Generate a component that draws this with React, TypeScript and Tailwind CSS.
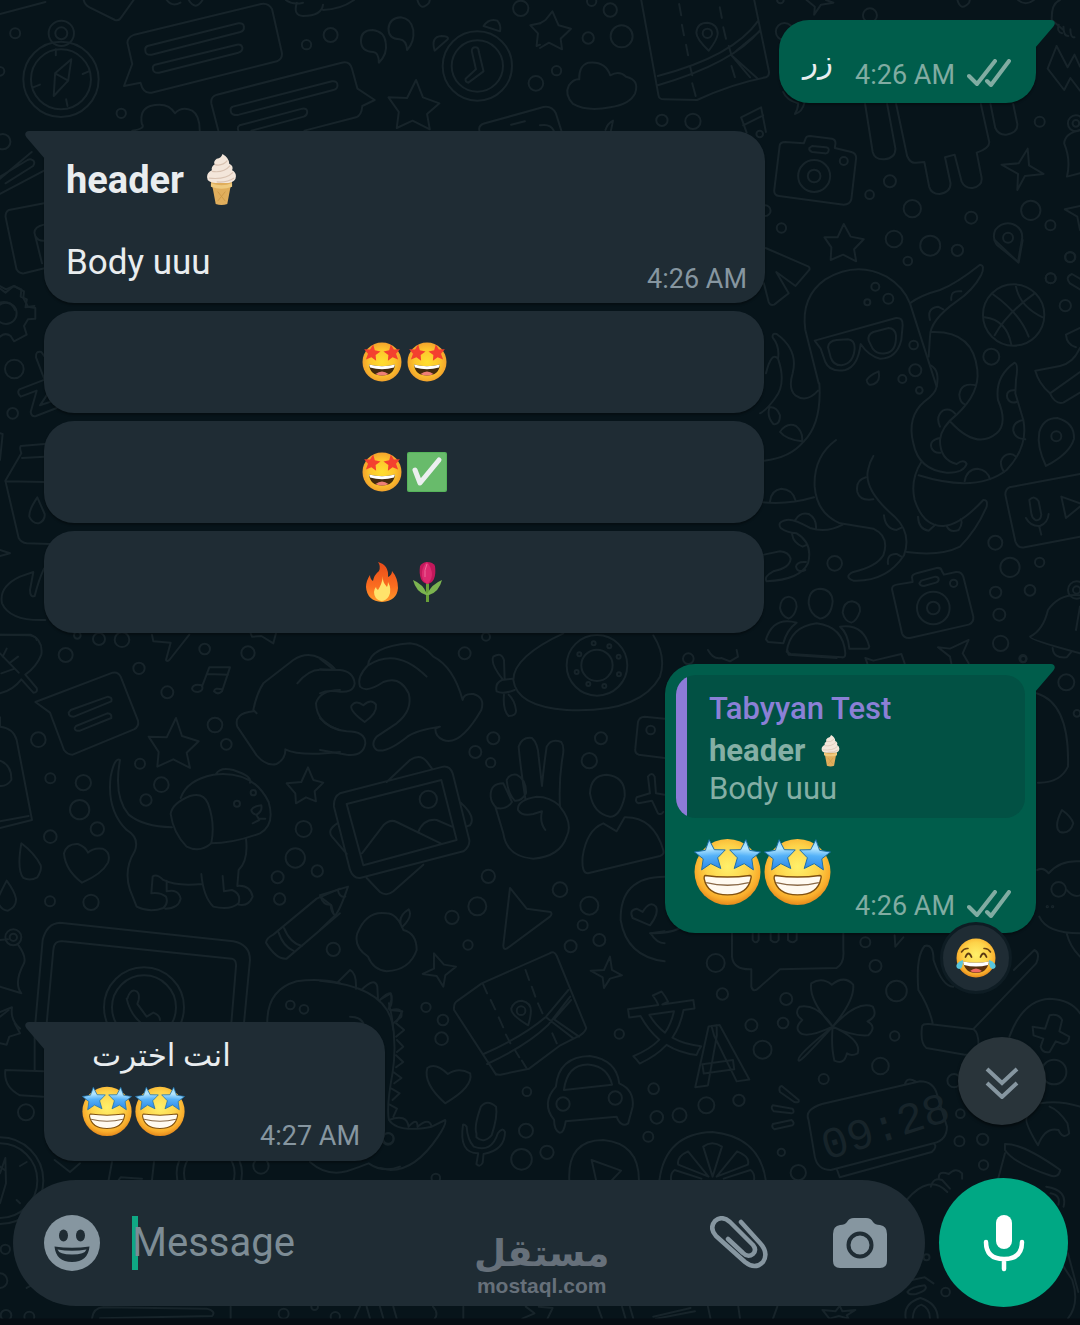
import type { ReactNode } from "react";
import clsx from "clsx";

type Region = {
  id: string;
  origin: [number, number];
  scale: [number, number];
  lines: string[];
  dots: [number, number, number][];
};

// Wallpaper doodles, each region has its own origin and scale
const DOODLES: Region[] = [
  {
    id: "top-left",
    origin: [0, 0],
    scale: [0.3444, 0.3333],
    lines: [
      "M207 178L160 220L156 288L198 242ZM160 220L198 242M162 148V166M240 222L258 214M96 262L116 254M192 298L196 318",
      "M0 42L132 6M243 0Q246 14 260 22L334 60Q346 64 352 52L388 0M484 0Q500 22 524 8M548 0Q568 34 588 0",
      "M370 128Q370 112 390 104L758 12Q780 8 790 28L818 156Q822 176 804 184L440 278Q416 282 408 248L360 258L384 192Z",
      "M428 138L692 70Q708 68 708 80Q710 92 698 96L440 164Q422 166 422 152Q420 142 428 138ZM450 194L688 134Q702 132 704 144Q704 154 692 158L462 218Q444 220 444 206Q442 198 450 194Z",
      "M634 392L614 312Q610 290 630 284L992 188Q1016 182 1022 206L1038 266L1088 300L1052 318Q1050 346 1034 352L884 392",
      "M676 320L964 244Q980 242 980 256Q980 268 968 270L694 344Q672 348 670 334Q668 322 676 320ZM696 376L878 326Q892 324 892 336Q892 346 882 350L730 392M696 376Q688 380 692 392",
      "M384 392Q424 386 412 372Q404 330 436 318Q488 304 508 340Q528 318 558 332Q580 346 580 392",
      "M1100 188Q1100 158 1084 156Q1048 154 1048 122Q1048 90 1082 90Q1116 94 1120 128Q1126 162 1100 188ZM1182 150Q1180 120 1160 118Q1128 116 1128 86Q1130 54 1164 52Q1194 56 1200 90Q1204 126 1182 150Z",
      "M1208 240L1228 292L1276 310L1240 342L1248 388L1198 362L1152 384L1158 336L1128 292L1182 294Z",
      "M1380 142Q1390 142 1390 154L1404 214L1360 248Q1350 246 1352 236L1382 208L1370 154Q1370 142 1380 142ZM1262 152Q1250 110 1282 108Q1304 108 1300 118ZM1404 78Q1420 54 1444 62Q1456 76 1452 94Z",
      "M830 0Q850 16 880 8M938 30Q990 28 1028 0M862 8Q850 46 880 48Q934 48 938 14M1212 0Q1222 36 1246 8L1248 0M1540 76L1568 70M1540 76L1562 100L1558 138L1568 134M1392 392Q1388 376 1408 370L1568 324M1484 374L1524 364",
      "M0 536L92 456M0 582L128 512M16 550L96 498Q104 486 94 480Q88 476 80 480L0 530M128 610L26 630Q16 636 16 650L48 808Q56 822 70 820L132 804M128 674Q100 680 100 698L122 790M104 710Q112 724 130 722",
      "M0 866L16 878L40 858L62 868L60 890L78 898L74 922L100 918M0 908Q30 900 44 930",
    ],
    dots: [
      [177, 238, 113], [177, 238, 90], [178, 100, 38], [178, 100, 18], [44, 100, 15], [352, 340, 14],
      [0, 214, 13], [8, 425, 23], [890, 134, 14], [960, 105, 21], [1386, 198, 104], [1386, 198, 77],
      [1512, 25, 23], [1556, 250, 22],
    ],
  },
  {
    id: "top-right",
    origin: [540, 0],
    scale: [0.3444, 0.3333],
    lines: [
      "M0 70L16 60L36 34L54 76L90 86L60 116L64 148L26 128L0 144",
      "M294 0L344 286Q346 298 360 298L456 300Q560 250 656 232Q668 226 664 210L622 0M342 228Q560 170 634 62M342 256Q560 190 638 92M436 200L442 226M548 138L556 166L630 234M556 166L610 232M640 92L570 152",
      "M404 12L410 46M412 74L418 106M424 134L430 166M442 250L452 288M522 22L528 54M532 82L540 116M556 198L566 232",
      "M490 152Q454 116 454 98Q456 68 486 68Q516 72 516 102Q514 120 490 152Z",
      "M96 312Q70 284 84 256Q98 236 114 238Q112 198 140 188Q190 182 204 226Q230 210 250 230Q290 240 276 280Q262 312 204 322Q136 336 96 312Z",
      "M0 324Q32 312 46 340L62 392M0 376Q30 370 40 392M190 390Q196 370 212 362L206 392M600 398L584 352L642 322L656 396M590 376L648 346",
      "M774 0L798 20L796 44L816 14L852 8L830 0M1212 0Q1222 36 1246 8L1248 0M1388 0Q1410 20 1434 0",
      "M706 276Q716 302 750 310Q748 330 740 342Q762 336 768 308",
      "M696 436Q698 426 712 426L766 430L772 414Q774 408 784 408L848 416Q858 418 858 430L856 444L904 456Q918 460 918 474L904 598Q900 614 882 614L694 588Q680 586 680 572ZM790 438L830 442Q840 444 838 452Q836 462 826 460L790 456Q780 452 782 444Z",
      "M944 312L966 456Q972 480 1000 478Q1032 474 1032 446L1008 312M1034 312L1066 468Q1076 492 1092 488L1116 486L1130 560Q1136 582 1160 582Q1192 578 1192 550L1176 472L1204 464L1224 544Q1234 566 1256 564Q1286 558 1282 532L1268 458Q1308 444 1304 424L1280 312M1308 312L1322 384Q1332 406 1354 404Q1388 398 1386 372L1374 312",
      "M1416 446L1420 496L1462 522L1408 528L1386 570L1388 522L1340 494L1390 490Z",
      "M1500 138L1532 202L1552 164L1568 200M1500 138L1474 206L1522 270L1540 234L1568 272M1486 60Q1484 10 1510 0M1486 60L1520 90M1506 74Q1500 96 1516 100M1520 80Q1520 108 1534 108M1540 88Q1540 114 1552 112",
      "M1568 390Q1524 400 1522 430Q1542 480 1530 530L1568 520M1524 628L1568 618M1524 628L1560 650L1568 690",
      "M882 672L902 710L940 718L912 748L918 784L880 764L844 780L846 742L826 712L864 712Z",
      "M1388 786L1326 734Q1312 714 1322 690Q1342 664 1372 672Q1402 684 1400 714Z",
      "M655 744L780 800Q786 806 780 812L742 858L686 816L722 880L680 914Q668 918 664 906L650 850",
    ],
    dots: [
      [486, 100, 14], [204, 30, 20], [140, 114, 17], [237, 109, 33], [48, 212, 14], [710, 95, 26],
      [958, 46, 21], [354, 361, 17], [444, 364, 23], [638, 402, 10], [796, 528, 48], [796, 528, 19], [882, 483, 12],
      [1016, 544, 18], [957, 584, 13], [1081, 626, 26], [1252, 653, 18], [1425, 631, 29], [1028, 717, 25],
      [1133, 737, 30], [1212, 751, 17], [1068, 783, 13], [701, 684, 14], [654, 632, 16], [1359, 713, 15],
      [1482, 676, 15], [1451, 365, 15], [1556, 370, 24], [1556, 370, 10], [1483, 835, 15], [1540, 771, 15],
      [150, 4, 14], [698, 0, 10],
    ],
  },
  {
    id: "octopus",
    origin: [760, 240],
    scale: [0.3333, 0.3333],
    lines: [
      "M176 430L136 270Q122 170 196 118Q290 62 380 110Q430 140 450 190L530 440Q526 462 494 484Q440 530 460 610Q476 690 560 698Q610 700 620 672Q612 656 590 672Q540 660 540 600Q544 560 590 524Q660 460 652 390Q640 270 512 276",
      "M450 190Q480 166 540 150Q590 130 660 74Q676 76 664 104Q640 150 590 184Q510 240 510 290L506 350M512 376Q540 390 530 440",
      "M572 546Q650 630 710 580Q744 550 714 480Q704 410 764 368Q776 372 768 420L766 460L790 540Q806 620 740 690Q650 760 476 706M484 666Q450 720 464 780Q490 860 550 858Q600 856 670 780Q684 778 680 800Q650 870 600 920Q540 950 440 936",
      "M164 302L408 234Q430 232 428 256L424 300Q410 356 360 356Q326 348 302 312Q294 380 256 390Q210 398 196 366L182 326ZM204 322Q206 302 230 300L264 298Q284 300 284 324Q282 370 244 376Q220 376 212 352ZM326 302Q322 284 340 276L386 264Q404 264 408 286Q410 336 376 340Q352 344 338 326Z",
      "M320 420Q328 406 356 394Q362 424 342 432Q322 440 320 420Z",
      "M178 430Q186 550 130 606Q90 654 12 662M174 452Q140 490 106 466Q84 446 98 400Q116 330 50 282Q36 278 38 292Q60 320 54 356Q34 334 18 400M54 356Q80 430 46 474Q20 510 0 520M30 502Q50 500 60 526Q60 556 40 552Q20 530 28 504M60 576Q80 546 108 558Q130 576 126 604Q80 600 60 576",
      "M228 600Q160 650 164 740Q170 820 240 850Q300 860 340 866Q390 890 370 946Q350 980 280 996Q250 1010 280 1022Q380 1026 432 946Q456 880 404 830Q310 750 324 690Q328 668 340 648",
      "M318 712Q286 720 292 756Q300 784 340 778M372 826Q376 866 410 870L426 862M384 972Q380 940 410 942L424 950M510 240Q500 204 534 200L550 208M574 180Q570 150 604 154M648 436Q604 426 598 464Q600 490 616 494M540 560Q526 530 548 512Q570 502 586 522M540 594Q508 600 514 622Q520 640 542 638M614 724Q620 688 652 686Q684 690 690 718M766 450Q736 450 742 474Q750 492 770 486M790 540Q758 546 760 572Q764 596 796 598M732 696Q710 660 740 644Q756 638 768 650M474 830Q476 868 506 872L526 854M560 858Q570 880 596 870Q610 850 602 838",
      "M0 786Q80 796 162 772M30 784Q34 750 64 746Q98 748 106 780M248 854Q200 880 150 864Q100 836 80 840Q50 846 62 864Q80 878 110 880Q160 910 144 970Q120 1020 20 1024Q10 1010 40 994Q90 984 92 956Q86 936 60 934L12 944M106 840Q120 816 146 822Q170 836 168 866M96 882Q100 910 128 920L142 914M136 990Q112 1000 108 980Q110 964 138 966",
      "M698 162Q780 220 806 290M768 140Q780 200 848 232M824 160Q740 220 704 286M674 232Q740 240 754 314",
      "M918 284L960 264M918 284Q920 314 948 322M960 324Q940 370 900 378L826 392Q836 430 870 460L960 396M870 460Q886 494 910 488L960 458M960 148L930 130Q914 112 936 102L960 116M704 0L776 68L788 0",
      "M858 678Q830 620 838 576Q850 534 892 534Q944 548 942 596Q930 640 858 678Z",
      "M960 702L748 742Q736 748 736 764L766 904Q774 926 794 922L960 890M808 780Q824 764 836 784L844 824Q842 844 826 840Q816 834 814 820ZM798 834Q812 860 840 858Q864 848 866 822M838 860L844 884M904 770L918 834L960 800M904 770L960 790",
      "M396 1048Q396 1036 410 1034L458 1026L456 1012Q456 1004 470 1000L530 984Q544 982 546 994L552 1004L588 996Q604 994 610 1010L640 1130Q642 1148 626 1154L450 1194Q432 1196 426 1180ZM484 1022L526 1010Q536 1010 536 1018Q536 1026 528 1028L492 1038Q480 1038 478 1030Z",
      "M80 1236Q90 1160 170 1150Q250 1160 256 1240Q256 1254 246 1252L92 1242ZM146 1090Q146 1048 180 1046Q216 1048 218 1084Q214 1130 180 1136Q150 1124 146 1090ZM60 1104Q62 1072 86 1070Q110 1074 110 1100Q104 1130 86 1136Q64 1128 60 1104ZM248 1118Q250 1086 276 1084Q302 1088 300 1114Q290 1144 274 1148Q254 1144 248 1118ZM110 1148Q40 1128 18 1198L24 1206L70 1210Q80 1170 110 1148ZM240 1160Q310 1150 328 1220Q326 1228 318 1226L268 1226Q264 1180 240 1160Z",
      "M534 1222L570 1226L626 1200L608 1240L626 1270M534 1222L570 1250L574 1270M316 1254L340 1262L424 1242L434 1270M316 1254L322 1270M960 1066Q900 1060 864 1110Q850 1170 810 1190Q808 1200 960 1240M878 1224Q880 1256 920 1252L934 1236M960 1100L948 1170",
    ],
    dots: [
      [346, 140, 12], [385, 176, 15], [322, 187, 9], [461, 315, 13], [466, 391, 18], [427, 417, 12], [478, 451, 10],
      [761, 225, 92], [694, 350, 24], [872, 115, 15], [916, 197, 17], [930, 52, 15], [889, 589, 15], [706, 908, 21],
      [750, 982, 29], [839, 967, 14], [224, 970, 22], [520, 1104, 49], [520, 1104, 19], [581, 1030, 11],
      [707, 1057, 17], [810, 1051, 16], [718, 1124, 18], [722, 1210, 23], [789, 1256, 11], [950, 1050, 26], [950, 1050, 11],
    ],
  },
  {
    id: "left-middle",
    origin: [0, 280],
    scale: [0.3333, 0.3333],
    lines: [
      "M0 18L18 28L42 18L72 34L70 54L84 80L106 84L106 116L84 118L72 138L80 164L42 184L32 168Q16 156 0 170",
      "M134 300L108 232Q106 212 124 216L134 230M136 298L58 328Q50 338 62 350L110 332L92 396Q94 412 108 408L170 384M120 376L144 340L162 362Z",
      "M134 492L62 498Q58 504 64 520L16 602L56 774Q64 788 80 790L150 792M66 534L134 530M16 604L134 606M112 652Q86 690 88 710Q98 732 116 730Q136 722 134 702ZM0 460L8 462L0 540M0 810L30 820L0 828",
      "M136 1020Q30 1024 6 970Q-4 920 60 890L100 876L90 930Q90 954 104 948Q116 900 132 866M0 1064L90 1066Q110 1070 110 1080",
    ],
    dots: [[18, 100, 32], [43, 267, 28], [38, 400, 16]],
  },
  {
    id: "puppy",
    origin: [0, 630],
    scale: [0.3333, 0.3333],
    lines: [
      "M0 14L92 14Q130 30 124 74Q110 110 76 134L110 174Q114 188 100 188L64 148Q40 180 0 190M0 70L56 128M8 80L20 56M28 100L54 80M4 130L44 116",
      "M106 216L338 128Q354 124 362 140L414 272Q418 290 402 298L218 374Q202 374 192 360L150 248ZM212 240L324 200Q338 202 334 214L222 260Q206 260 206 248ZM228 288L322 250Q336 250 334 264L240 302Q224 304 224 294Z",
      "M528 264L546 318L596 334L560 368L570 414L520 388L472 410L476 366L446 320L500 322Z",
      "M456 14L460 34L512 38L498 90Q500 96 508 90L568 14M752 10L756 20L784 18L820 40L828 10M576 176Q580 160 606 166Q612 182 594 186Q578 186 576 176ZM606 170L628 112L690 112L666 184Q654 196 642 184Q644 172 666 178M622 132L684 134",
      "M770 250L760 240Q770 190 790 160L880 90Q920 64 960 84Q990 100 1004 116M892 160Q930 114 970 120L1020 120M760 244Q700 250 712 290L770 376Q800 410 830 402Q858 386 856 358Q900 380 1020 366M1020 180Q960 180 948 220Q950 280 1020 300",
      "M516 592Q430 590 386 554Q340 500 360 390Q344 380 332 440Q320 540 380 600Q420 624 404 664Q370 720 390 780L410 830Q450 850 490 834Q506 820 498 800Q480 786 454 790L458 740Q470 730 490 750Q530 770 606 762M604 732Q610 800 640 830Q690 842 716 820Q724 790 696 780L672 784L668 738M738 626Q746 690 716 720L712 768Q750 764 758 800Q746 830 716 824M500 752L500 784Q536 776 542 806Q536 836 496 836",
      "M542 504Q560 450 640 434Q760 420 806 516Q826 584 780 610Q700 640 632 640M512 552Q516 520 570 498Q610 486 624 520Q646 580 634 640Q600 670 560 650Q520 610 512 552ZM648 432Q660 410 700 420Q760 440 750 458M754 540Q760 528 784 526Q788 544 770 554Q756 552 754 540ZM770 556L778 570L758 580M778 566L796 566",
      "M924 412L940 450L970 458L944 484L948 514L918 502L888 520L886 490L860 460L904 456Z",
      "M246 758Q196 720 192 670Q200 640 234 642Q256 650 264 668Q280 652 308 656Q334 668 324 698Q306 732 246 758ZM64 640Q50 720 70 744Q90 754 112 742Q126 720 122 706Q104 670 64 640ZM20 752Q0 790 -8 810Q0 840 24 842Q50 830 48 806Q44 784 20 752Z",
      "M0 262V290Q40 294 50 330L96 570L0 594M0 574L86 558M0 392Q36 406 34 450Q20 470 0 468",
      "M106 1180L128 930Q140 880 180 878L700 934Q750 944 750 990L732 1180M140 1180L160 960Q162 930 190 934L696 986Q710 990 708 1010L694 1180",
      "M382 1106Q390 1080 404 1082Q420 1084 416 1110L412 1122L440 1160L460 1148Q480 1156 480 1170M380 1106Q390 1150 420 1176",
      "M0 930L24 928M54 944Q80 980 72 1000Q40 1060 64 1090L0 1070M0 1146L36 1132Q30 1170 60 1196M802 1180Q800 1080 890 1054Q960 1044 1020 1060",
      "M798 938Q800 924 820 914L950 806L1020 776M798 938Q830 990 860 986L1020 850M836 908Q850 950 880 962M852 894Q870 940 906 948M962 800Q970 826 992 824Q994 850 1006 856",
    ],
    dots: [
      [197, 75, 21], [297, 27, 18], [366, 29, 22], [232, 16, 10], [417, 115, 17], [502, 187, 18], [614, 57, 16], [744, 69, 20],
      [115, 329, 22], [645, 285, 22], [679, 343, 16], [420, 401, 15], [151, 445, 15], [250, 458, 23], [239, 539, 29],
      [484, 464, 22], [438, 510, 17], [292, 597, 20], [151, 620, 19], [711, 521, 9], [760, 488, 8], [150, 814, 15],
      [273, 817, 23], [911, 597, 24], [886, 684, 29], [952, 723, 17], [833, 742, 18], [839, 807, 17], [432, 1132, 120],
      [432, 1132, 96], [40, 922, 24], [40, 922, 11], [871, 1125, 13], [912, 1138, 13], [1000, 958, 20],
    ],
  },
  {
    id: "hands",
    origin: [320, 630],
    scale: [0.3333, 0.3333],
    lines: [
      "M144 106Q150 50 270 40Q310 44 340 80Q400 110 428 210Q430 190 460 192Q496 202 484 240Q420 350 370 330Q346 320 346 296L360 290Q290 300 262 320Q200 370 170 360Q150 344 170 320L230 280Q280 240 266 190Q240 136 190 156Q140 190 120 170Q110 140 144 106Q230 50 320 140",
      "M0 190Q20 180 50 184Q100 192 104 160Q100 124 60 120L0 118M0 264Q30 300 80 304Q136 304 136 340Q130 380 80 374L0 360M134 276Q90 244 94 228Q108 208 130 226Q154 204 168 224Q172 250 134 276ZM0 86L40 118",
      "M42 530Q40 500 60 490L370 410Q390 408 398 430L448 630Q450 650 430 664L120 744Q100 746 90 720ZM80 522L364 450L410 630L130 706ZM126 670L190 586Q210 566 230 576L362 640M294 608Q310 566 350 570L396 590M200 456L270 390Q300 370 320 394L336 416M420 516Q470 560 450 586L438 590M52 580Q20 600 36 620L80 672M140 744L180 786Q200 800 220 784L310 704",
      "M616 506Q600 400 596 350Q606 320 636 324Q654 340 656 380L666 468Q670 420 680 350Q694 324 724 336Q734 350 728 380Q716 450 720 530Q760 580 740 620Q720 680 640 686Q560 680 550 610L526 530M512 500Q510 460 550 460L576 516Q560 540 530 534Q514 520 512 500ZM560 450Q570 430 590 434Q620 450 618 490Q606 514 584 512Q564 490 560 450ZM720 528Q690 500 650 500Q590 510 594 540Q606 560 640 552L666 544Q658 576 676 600",
      "M730 10Q580 80 580 150Q590 230 740 240Q960 250 1020 140Q1040 80 1000 16M548 148Q510 100 520 80Q544 64 552 90L554 146M530 184Q524 160 546 150L576 146M530 184Q550 194 584 180M552 194Q548 240 566 258Q590 258 588 240Q584 210 566 194",
      "M810 490Q812 436 860 434Q918 440 914 500Q900 560 870 560Q820 550 810 490ZM804 730Q784 730 788 680Q800 600 850 580L890 604L914 562Q1000 560 1030 660Q1034 674 1020 678ZM1034 384L956 374Q944 370 946 356L954 276Q958 260 974 260L1034 266M1034 494L1008 490L1004 440Q996 424 984 440L990 490L950 502Q944 516 956 520L996 512L1014 550Q1024 556 1030 546",
      "M144 980Q100 950 112 910Q140 840 200 850Q230 850 250 900Q290 910 290 960Q270 1020 200 1024Q160 1020 144 980ZM246 892Q230 860 266 838Q280 860 246 892M570 774L620 836L692 846Q698 852 690 860L560 956Q550 960 550 946Z",
      "M342 970L372 1004L408 1010L376 1036L370 1070L350 1038L308 1032L342 1016ZM870 980L876 1020L906 1036L870 1046L852 1074L848 1042L812 1022L852 1020Z",
      "M0 796L84 770Q60 840 46 856L0 900M54 782Q60 804 76 800M0 800L34 826L40 850M0 1052Q210 1070 220 1200M54 1056L90 1020Q110 1030 108 1076M124 1080Q164 1040 172 1070L174 1108M180 1110Q220 1070 214 1110L206 1136M214 1140Q250 1130 244 1160L220 1180M90 1160Q120 1160 130 1180",
      "M1034 740Q900 740 902 870Q920 980 1034 994M990 886L938 864Q926 840 950 836L968 846Q990 810 1008 830Q1018 850 990 886ZM992 910L1034 904M992 910Q1010 940 1034 940",
    ],
    dots: [
      [831, 106, 91], [831, 106, 47], [821, 40, 6], [868, 49, 6], [896, 80, 6], [897, 133, 6], [853, 168, 6], [805, 162, 6],
      [770, 126, 6], [778, 73, 6], [434, 70, 18], [498, 20, 12], [520, 325, 18], [466, 366, 18], [512, 398, 14],
      [325, 508, 26], [843, 325, 18], [808, 392, 23], [992, 300, 13], [505, 739, 20], [472, 829, 27], [396, 862, 20],
      [444, 945, 14], [720, 779, 22], [808, 827, 27], [788, 886, 15], [838, 930, 18], [752, 949, 18],
    ],
  },
  {
    id: "right-edge",
    origin: [650, 650],
    scale: [0.3333, 0.3333],
    lines: [
      "M1160 130Q1260 160 1254 350Q1230 400 1164 398M1236 480Q1210 530 1230 546Q1260 554 1270 520Q1264 500 1236 480ZM1162 660Q1180 650 1196 670Q1230 630 1290 634M1168 800Q1190 850 1290 850M1250 850Q1260 890 1290 920M1250 720Q1270 744 1290 736",
      "M174 0Q190 30 214 24L240 34L264 20L260 0M412 0L416 14L560 24M246 850V920Q250 960 304 958V1010Q310 1030 326 1014L390 958L560 954Q584 940 580 900V850M308 850V870Q318 884 326 870V850M362 850V870Q376 884 386 870V850M414 850V870Q428 884 440 870V850",
      "M734 856L736 890L760 862M0 850Q70 850 96 830",
    ],
    dots: [
      [115, 26, 16], [1120, 27, 9], [1249, 97, 24], [1281, 190, 10], [646, 877, 15],
      [1226, 718, 22], [1192, 770, 2], [1208, 770, 2],
    ],
  },
  {
    id: "bottom-right",
    origin: [380, 940],
    scale: [0.4464, 0.3333],
    lines: [
      "M260 404L166 210Q164 190 174 182L228 130L380 40Q390 30 396 48L462 264Q460 276 448 286L404 316L334 386L270 404Q260 406 256 396M232 342Q320 290 372 230L422 150M240 372Q330 316 376 256L426 170M372 232L434 296M390 238L446 290M390 238L428 180",
      "M230 130L240 160M248 180L258 208M266 232L276 262M282 284L292 310M302 330L312 352M318 362L328 384M326 90L334 120M340 140L348 170M354 190L364 220M386 280L396 310",
      "M332 256Q294 226 294 206Q300 182 318 182Q338 188 338 212Q338 230 332 256Z",
      "M146 490Q96 430 106 384Q124 366 152 402Q176 380 202 400Q210 440 146 490ZM216 580Q210 560 226 500Q240 476 260 500Q264 530 250 586Q232 612 216 592ZM186 554Q176 640 220 640L216 672Q224 684 230 668L232 642Q280 630 280 576Q274 560 264 580Q250 640 210 620Q196 600 194 560Q190 552 186 554Z",
      "M394 440Q400 350 470 348Q530 360 536 430Q570 450 566 500L556 550Q540 564 530 530L416 544Q412 580 402 578Q390 570 390 540Q360 490 394 440ZM412 450Q420 370 470 374Q510 380 520 434Z",
      "M1014 260Q960 180 966 130Q990 110 1012 134Q1040 104 1060 134Q1064 180 1014 260Q1070 180 1104 200Q1116 230 1092 244Q1114 260 1094 286Q1060 290 1014 260Q1080 300 1070 340Q1056 350 1046 340Q1040 376 1018 362Q1010 320 1014 260Q940 370 938 362Q930 350 1014 260Q950 300 938 274Q930 260 946 240Q926 220 940 200Q980 190 1014 260Z",
      "M900 438L938 480Q940 490 928 486L896 456Q892 440 900 438ZM880 496L924 506Q930 518 922 520L882 514Q874 504 880 496ZM880 552L922 540Q930 550 924 556L884 568Q876 562 880 552Z",
      "M960 540Q950 510 990 492L1210 424Q1240 424 1248 464L1270 560Q1270 600 1240 610L1010 690Q980 690 974 650ZM1024 690L1030 712L1236 636Q1250 620 1240 610M1176 432Q1180 410 1200 424",
      "M424 720Q420 600 500 600Q580 610 580 720M474 660L484 720M474 660L540 692L520 720M626 720Q640 580 745 576Q850 590 864 720M745 710L724 620Q744 600 766 620ZM736 710L690 634Q664 650 668 674ZM754 710L800 634Q830 650 824 674ZM720 716L660 690Q650 700 652 720M770 716L830 690Q840 700 838 720",
      "M1238 250Q1230 200 1206 150Q1200 50 1220 18Q1240 10 1240 60Q1260 140 1284 140M1330 266L1470 70Q1480 40 1466 30L1420 90M1214 262Q1214 250 1230 252L1330 268Q1344 280 1340 340Q1330 346 1310 344L1224 324Q1210 310 1214 262ZM1410 290Q1440 180 1500 176Q1550 180 1568 220M1462 260L1490 266L1500 226Q1520 220 1528 240L1522 274L1544 290Q1544 310 1530 312L1514 304L1500 336Q1484 340 1480 320L1486 296L1464 286Z",
      "M1480 490Q1520 480 1568 500M1500 500Q1520 510 1540 550L1544 580Q1530 600 1520 570Q1490 560 1474 616Q1440 540 1450 530M1400 612Q1440 610 1524 690Q1520 716 1500 706Q1420 670 1400 630ZM1400 640L1384 720M1252 716Q1250 690 1274 702Q1290 680 1304 700L1304 716",
      "M4 176L24 160Q30 190 20 206M22 210L50 214L38 244M36 250L54 270L36 290M38 300L52 320L38 336M36 346L52 366L36 382M30 396L48 414L32 430M26 446L44 460L28 480M22 494L38 506L30 530M20 540Q60 520 64 560Q84 530 84 560Q110 530 116 560L146 540Q150 550 130 590Q80 690 24 690L0 684M20 190Q40 300 28 400Q14 500 20 540Q40 580 116 560",
    ],
    dots: [
      [316, 212, 13], [103, 202, 14], [141, 240, 16], [138, 296, 19], [329, 455, 13], [536, 282, 14], [767, 162, 17],
      [910, 177, 18], [752, 69, 27], [903, 249, 16], [832, 256, 18], [857, 329, 27], [1153, 288, 14], [1157, 153, 31],
      [1110, 78, 18], [1121, 378, 25], [994, 417, 15], [613, 446, 16], [731, 496, 24], [804, 481, 17], [671, 526, 21],
      [620, 532, 19], [601, 590, 15], [327, 572, 21], [317, 658, 31], [374, 637, 20], [410, 492, 20], [527, 474, 20],
      [899, 637, 11], [937, 698, 23], [1300, 521, 13], [1298, 604, 15], [1350, 598, 17], [1352, 675, 14],
      [1286, 422, 20], [1510, 396, 37], [18, 597, 17], [125, 714, 13],
    ],
  },
  {
    id: "bottom-left",
    origin: [0, 1010],
    scale: [0.3333, 0.3333],
    lines: [
      "M0 20L26 0M0 100L20 104L28 80L60 70L44 40M104 60V180M130 184L16 180Q10 230 60 256L130 260M0 490L16 444L18 520L0 580M0 470L14 480M60 468L80 456M50 570L60 580M164 450L210 486L240 460M326 510L336 456M356 510L362 502L426 506M456 510L462 456M930 456Q980 500 1040 484Q1080 470 1106 460Q1150 490 1200 470",
      "M276 925Q280 894 310 892L620 896Q650 904 636 918L300 925M692 890V925M1064 925L1080 890M1100 890L1110 925M1140 890L1150 925M1180 890L1190 925M80 834L94 826",
    ],
    dots: [
      [0, 512, 130], [0, 512, 112], [78, 307, 24], [628, 490, 98], [628, 490, 76], [783, 468, 23], [16, 718, 14],
      [0, 812, 22], [18, 916, 16], [88, 920, 15], [851, 911, 15], [1006, 920, 14], [944, 890, 10], [1165, 385, 16],
    ],
  },
  {
    id: "bottom-bar",
    origin: [400, 1170],
    scale: [0.4337, 0.3333],
    lines: [
      "M76 410Q90 430 80 446M146 410V446M282 446L310 430L290 410M320 410L352 414L340 446M456 410L466 446M512 410L520 446M530 410L538 446M584 440L670 414M590 446L680 424M710 410L716 446M780 410L784 446M860 446L870 410M974 420L1004 424L1014 408L1020 424L1050 420L1030 436L1034 446L1012 438L990 446Z",
      "M1168 90Q1220 10 1262 66M1224 50Q1230 20 1250 30L1268 56M1166 446Q1160 400 1200 384Q1240 400 1240 446M1182 446Q1184 410 1202 404Q1222 414 1222 446M1170 366Q1180 350 1210 346Q1220 360 1190 372Q1174 376 1170 366ZM1180 330L1210 322L1230 340M1540 446Q1568 400 1550 330L1520 270M1490 50Q1540 60 1530 110M1500 70Q1524 76 1518 104M1540 250L1564 366",
    ],
    dots: [[1258, 366, 13], [1214, 262, 9]],
  },
];

const Wallpaper = () => (
  <svg
    aria-hidden="true"
    viewBox="0 0 1080 1325"
    preserveAspectRatio="xMidYMid slice"
    className="absolute inset-0 h-full w-full fill-none stroke-[#17242a]"
    strokeWidth="2"
    strokeLinecap="round"
    strokeLinejoin="round"
  >
    {DOODLES.map(({ id, origin: [ox, oy], scale: [sx, sy], lines, dots }) => (
      <g key={id}>
        <g transform={`translate(${ox} ${oy}) scale(${sx} ${sy})`}>
          {lines.map((d) => (
            <path key={d} d={d} vectorEffect="non-scaling-stroke" />
          ))}
        </g>
        {dots.map(([x, y, r]) => (
          <circle key={`${x}-${y}-${r}`} cx={ox + x * sx} cy={oy + y * sy} r={r * sy} />
        ))}
      </g>
    ))}
    <g strokeWidth="2" fontWeight="700">
      <text x="628" y="1054" fontSize="72" transform="rotate(-8 660 1030)" fontFamily="Noto Sans CJK SC, sans-serif">
        文
      </text>
      <text x="690" y="1084" fontSize="82" transform="rotate(-8 716 1050)" fontFamily="Roboto, sans-serif">
        A
      </text>
      <text
        x="820"
        y="1143"
        fontSize="44"
        fontWeight="400"
        transform="rotate(-18 878 1130)"
        fontFamily="Liberation Mono, monospace"
        className="fill-[#17242a] stroke-none"
      >
        09:28
      </text>
    </g>
    <path d="M0 1322H1080" className="stroke-[#060d13]" strokeWidth="7" />
  </svg>
);

/* ---------- emoji ---------- */

type EmojiProps = { className?: string };

const STAR = "M0 -10L2.8 -3.6L9.6 -3L4.5 1.6L6 8.4L0 4.9L-6 8.4L-4.5 1.6L-9.6 -3L-2.8 -3.6Z";

const StarStruckRed = ({ className }: EmojiProps) => (
  <svg role="img" aria-label="🤩" viewBox="0 0 40 40" className={className}>
    <defs>
      <radialGradient id="yellowFace">
        <stop offset="0" stopColor="#ffdf30" />
        <stop offset=".65" stopColor="#fcc42c" />
        <stop offset="1" stopColor="#f2a32c" />
      </radialGradient>
    </defs>
    <circle cx="20" cy="20" r="19.5" fill="url(#yellowFace)" />
    <path d="M7 22.5Q20 26 33 22.5Q32 33.500 20 33.500Q8 33.500 7 22.5Z" fill="#422b0d" />
    <path d="M7 22.5Q20 26 33 22.5L32 25.5Q20 29 8 25.5Z" fill="#fff" />
    <path d="M13.500 32Q20 27 26.500 32Q20 35 13.500 32Z" fill="#ef7f76" />
    <path d={STAR} transform="translate(10 11) rotate(8) scale(.86)" fill="#f4402f" />
    <path d={STAR} transform="translate(30 11) rotate(-8) scale(.86)" fill="#f4402f" />
  </svg>
);

const StarStruckBlue = ({ className }: EmojiProps) => (
  <svg role="img" aria-label="🤩" viewBox="0 0 66 66" className={className}>
    <defs>
      <radialGradient id="goldFace" cx=".5" cy=".42" r=".58">
        <stop offset="0" stopColor="#fff06a" />
        <stop offset=".55" stopColor="#fdd34a" />
        <stop offset=".85" stopColor="#f9ad2c" />
        <stop offset="1" stopColor="#e58a1c" />
      </radialGradient>
      <linearGradient id="blueStar" x2="0" y2="1">
        <stop offset="0" stopColor="#8fd4fb" />
        <stop offset=".3" stopColor="#b4e6ff" />
        <stop offset=".55" stopColor="#55b2f8" />
        <stop offset="1" stopColor="#2b86e8" />
      </linearGradient>
    </defs>
    <circle cx="33" cy="33.5" r="32.5" fill="url(#goldFace)" />
    <path
      d="M11 37Q33 40 55 37Q57 37 56 40Q53 56 33 56Q13 56 10 40Q10 37 11 37Z"
      fill="#fffaf0"
      stroke="#80500f"
      strokeWidth="1.400"
    />
    <path d="M12 44Q33 49 54 44" stroke="#8a6a48" strokeWidth="1.400" fill="none" />
    <g fill="url(#blueStar)" stroke="#1d6fa8" strokeWidth=".6">
      <path d={STAR} transform="translate(16 17.500) rotate(-4) scale(1.58)" />
      <path d={STAR} transform="translate(50 17.500) rotate(4) scale(1.58)" />
    </g>
  </svg>
);

const Joy = ({ className }: EmojiProps) => (
  <svg role="img" aria-label="😂" viewBox="0 0 40 40" className={className}>
    <circle cx="20" cy="20" r="19.500" fill="url(#goldFace)" />
    <path d="M9.500 19Q12.500 12 15.500 19M24.500 19Q27.500 12 30.500 19" fill="none" stroke="#5c3a12" strokeWidth="1.800" strokeLinecap="round" />
    <path d="M5.500 14Q8 10 12 10.500M34.500 14Q32 10 28 10.500" fill="none" stroke="#6b4413" strokeWidth="1.600" strokeLinecap="round" />
    <path d="M7 23.500Q20 26 33 23.500Q31 35 20 35Q9 35 7 23.500Z" fill="#5a310f" />
    <path d="M7 23.500Q20 26 33 23.500L32 27Q20 30 8 27Z" fill="#fff" />
    <path d="M14 33Q20 28 26 33Q20 36 14 33Z" fill="#f06a62" />
    <path d="M7 22Q7 31 3 31Q-1 30 1 26Q3 23 7 22ZM33 22Q33 31 37 31Q41 30 39 26Q37 23 33 22Z" fill="#59c6dd" />
  </svg>
);

const IceCream = ({ className }: EmojiProps) => (
  <svg role="img" aria-label="🍦" viewBox="0 0 32 54" className={className}>
    <path d="M5 29H27L25 36L22 52Q16 54 10 52L7 36Z" fill="#e0ae5c" />
    <path d="M5 30Q16 35 27 30V34Q16 38 5 34Z" fill="#efca7e" />
    <path d="M12 39L20 49M20 39L12 49" stroke="#cd9a48" strokeWidth="1" />
    <path
      d="M17 0Q16 4 11 5Q7 8 9 11Q5 13 6 17Q1 19 1 24Q1 30 10 30H23Q31 29 31 23Q31 19 27 17Q29 12 24 10Q24 4 17 0Z"
      fill="#f3e6da"
    />
    <path d="M9 11Q17 13 22 7M6 18Q18 20 25 12M3 25Q20 27 28 19M11 29Q22 30 29 25" fill="none" stroke="#d9c3b2" strokeWidth="1.200" />
  </svg>
);

const CheckMark = ({ className }: EmojiProps) => (
  <svg role="img" aria-label="✅" viewBox="0 0 40 40" className={className}>
    <rect width="40" height="40" rx="2" fill="#56b45b" />
    <rect x="1" y="1" width="38" height="38" rx="2" fill="#68bb6b" />
    <path d="M8 18L13 31L32 8" fill="none" stroke="#eceff0" strokeWidth="5" strokeLinecap="round" strokeLinejoin="round" />
  </svg>
);

const Fire = ({ className }: EmojiProps) => (
  <svg role="img" aria-label="🔥" viewBox="0 0 40 40" className={className}>
    <defs>
      <linearGradient id="flame" x2="0" y2="1">
        <stop offset="0" stopColor="#e64a19" />
        <stop offset=".6" stopColor="#fb6d20" />
        <stop offset="1" stopColor="#ff9a2b" />
      </linearGradient>
    </defs>
    <path
      d="M16 0Q27 3 26 15Q30 13 30 9Q36 16 36 26Q35 39 20 40Q5 39 4 25Q4 19 8 13Q8 17 11 19Q12 13 17 9Q19 4 16 0Z"
      fill="url(#flame)"
    />
    <path d="M21 14Q20 20 25 25Q26 23 26 20Q30 27 27 34Q24 39 19 39Q12 37 12 30Q12 27 14 25Q14 27 16 28Q20 22 21 14Z" fill="#ffe36b" />
  </svg>
);

const Tulip = ({ className }: EmojiProps) => (
  <svg role="img" aria-label="🌷" viewBox="0 0 40 40" className={className}>
    <path d="M19 20H22V40H19Z" fill="#689f38" />
    <path d="M19 33Q9 30 6 18Q16 22 20 32Q25 22 35 18Q32 30 22 33Z" fill="#7cb450" />
    <path d="M13 4Q16 0 20 0Q26 0 28 4Q30 20 20.500 22Q11 20 13 4Z" fill="#c2185b" />
    <path d="M20 0Q25 6 25 13Q24 19 20.500 22Q14 19 15 10Q16 3 20 0Z" fill="#dc2a70" />
    <path d="M20 2Q17 8 18 15" fill="none" stroke="#ee6a9a" strokeWidth="1" />
  </svg>
);

/* ---------- icons ---------- */

const DoubleTick = () => (
  <svg role="img" aria-label="Delivered" viewBox="0 0 44 28" className="mb-1 ml-3 h-7 w-11 shrink-0">
    <path d="M2 17L10 25L28 2M20 22L24 26L42 2" fill="none" stroke="#81aca2" strokeWidth="4" strokeLinecap="round" strokeLinejoin="round" />
  </svg>
);

const SmileIcon = () => (
  <svg viewBox="0 0 56 56" className="h-14 w-14">
    <circle cx="28" cy="28" r="28" fill="#8696a0" />
    <g fill="#1f2c34">
      <ellipse cx="19.500" cy="20.500" rx="4.500" ry="6" />
      <ellipse cx="36.500" cy="20.500" rx="4.500" ry="6" />
      <path d="M10.500 31.500Q28 34 45.500 31.500Q44 47 28 47Q12 47 10.500 31.500Z" />
    </g>
    <path d="M13.500 34.500Q28 37 42.500 34.500Q41 39.500 28 39.500Q15 39.500 13.500 34.500Z" fill="#8696a0" />
  </svg>
);

const ClipIcon = () => (
  <svg viewBox="0 0 58 54" className="h-[54px] w-[58px]">
    <path
      d="M31 6L50 27Q59 37 53 46Q45 54 35 46L6 20Q-1 12 5 5Q12 -1 20 6L43 29Q47 34 43 38Q38 42 33 37L18 23"
      fill="none"
      stroke="#8696a0"
      strokeWidth="4.500"
      strokeLinecap="round"
      strokeLinejoin="round"
    />
  </svg>
);

const CameraIcon = () => (
  <svg viewBox="0 0 56 52" className="h-[52px] w-14">
    <path
      d="M8 8Q13 8 15 5Q17 1 22 1H34Q39 1 41 5Q43 8 48 8Q55 9 55 17V44Q55 51 48 51H8Q1 51 1 44V17Q1 9 8 8Z"
      fill="#8696a0"
    />
    <circle cx="28" cy="28" r="11.500" fill="#8696a0" stroke="#1f2c34" strokeWidth="4" />
  </svg>
);

const MicIcon = () => (
  <svg viewBox="0 0 42 58" className="h-[58px] w-[42px]">
    <rect x="13" y="1" width="16" height="34" rx="8" fill="#fff" />
    <path d="M3 28Q3 45 21 45Q39 45 39 28M21 45V55" fill="none" stroke="#fff" strokeWidth="4.500" strokeLinecap="round" />
  </svg>
);

const ChevronsIcon = () => (
  <svg viewBox="0 0 36 32" className="mt-1 h-8 w-9">
    <path d="M3 2L18 16L33 2M3 16L18 30L33 16" fill="none" stroke="#8696a0" strokeWidth="4" />
  </svg>
);

/* ---------- chat ---------- */

const Bubble = ({ sent = false, className, children }: { sent?: boolean; className?: string; children: ReactNode }) => (
  <article
    className={clsx(
      "relative max-w-full rounded-[30px] shadow-[0_2px_2px_rgba(0,0,0,0.3)]",
      sent ? "self-end rounded-tr-none bg-[#005d4b]" : "self-start rounded-tl-none bg-[#1f2c34]",
      className,
    )}
  >
    <svg
      aria-hidden="true"
      viewBox="0 0 20 28"
      className={clsx("absolute top-0 h-7 w-5", sent ? "-right-[19px] -scale-x-100 fill-[#005d4b]" : "-left-[19px] fill-[#1f2c34]")}
    >
      <path d="M20 0H4C0 0 -1 4 2 7L20 28Z" />
    </svg>
    {children}
  </article>
);

const Time = ({ sent = false, children }: { sent?: boolean; children: ReactNode }) => (
  <time className={clsx("ml-auto shrink-0 text-[27px] leading-8", sent ? "text-[#81aca2]" : "text-[#8696a0]")}>{children}</time>
);

const ReplyButton = ({ children }: { children: ReactNode }) => (
  <button
    type="button"
    className="flex h-[102px] w-[720px] max-w-full items-center justify-center gap-[5px] rounded-[30px] bg-[#1f2c34] shadow-[0_2px_2px_rgba(0,0,0,0.3)]"
  >
    {children}
  </button>
);

export default function App() {
  return (
    <div className="relative flex min-h-screen flex-col overflow-hidden bg-[#07141a] font-[Roboto,'DejaVu_Sans',sans-serif]">
      <Wallpaper />

      <main className="relative flex flex-1 flex-col px-11 pt-5">
        <Bubble sent className="flex items-end pt-5 pr-[25px] pb-3 pl-6">
          <p dir="rtl" lang="ar" className="mr-[22px] pb-[7px] text-[31px] leading-[44px] text-[#e9edef]">
            زر
          </p>
          <Time sent>4:26 AM</Time>
          <DoubleTick />
        </Bubble>

        <Bubble className="mt-7 w-[721px] pt-[23px] pr-[18px] pb-2 pl-[22px]">
          <div className="flex h-[52px] items-center gap-[22px] text-[38px] font-bold text-[#e9edef]">
            header
            <IceCream className="h-[52px] w-[31px]" />
          </div>
          <div className="mt-[35px] flex items-end">
            <p className="pb-2.5 text-[35px] leading-[44px] text-[#e9edef]">Body uuu</p>
            <Time>4:26 AM</Time>
          </div>
        </Bubble>

        <div className="mt-2 flex flex-col gap-2">
          <ReplyButton>
            <StarStruckRed className="size-10" />
            <StarStruckRed className="size-10" />
          </ReplyButton>
          <ReplyButton>
            <StarStruckRed className="size-10" />
            <CheckMark className="size-10" />
          </ReplyButton>
          <ReplyButton>
            <Fire className="size-10" />
            <Tulip className="size-10" />
          </ReplyButton>
        </div>

        <Bubble sent className="mt-[31px] w-[371px] p-[11px]">
          <blockquote className="overflow-hidden rounded-[20px] bg-[#025144]">
            <div className="border-l-[11px] border-[#8d7bd8] pt-3.5 pb-[13px] pl-[22px] text-[31px] text-[#85afa5]">
              <p className="leading-10 font-medium text-[#8b80d6]">Tabyyan Test</p>
              <div className="flex h-11 items-center gap-4 font-bold">
                header
                <IceCream className="h-8 w-[19px]" />
              </div>
              <p className="leading-8">Body uuu</p>
            </div>
          </blockquote>
          <div className="mt-5 flex items-end pr-3.5">
            <div className="mb-[17px] ml-[18px] flex gap-[3px]">
              <StarStruckBlue className="size-[67px]" />
              <StarStruckBlue className="size-[67px]" />
            </div>
            <Time sent>4:26 AM</Time>
            <DoubleTick />
          </div>
          <button
            type="button"
            aria-label="Reactions"
            className="absolute right-6 -bottom-[61px] flex size-[72px] items-center justify-center rounded-full border-3 border-[#0e1c23] bg-[#1f2c34]"
          >
            <Joy className="size-10" />
          </button>
        </Bubble>

        <Bubble className="mt-[89px] w-[341px] pt-3 pr-[25px] pb-[9px]">
          <p dir="rtl" lang="ar" className="ml-12 w-fit text-[31px] leading-[44px] text-[#e9edef]">
            انت اخترت
          </p>
          <div className="mt-2 flex items-end">
            <div className="mb-4 ml-[38px] flex gap-[3px]">
              <StarStruckBlue className="size-[50px]" />
              <StarStruckBlue className="size-[50px]" />
            </div>
            <Time>4:27 AM</Time>
          </div>
        </Bubble>
      </main>

      <footer className="relative mt-[17px] flex items-center gap-3.5 pr-3 pb-[18px] pl-[13px]">
        <button
          type="button"
          aria-label="Scroll to bottom"
          className="absolute right-[34px] bottom-[200px] flex size-[88px] items-center justify-center rounded-full bg-[#29343a] shadow-[0_2px_3px_rgba(0,0,0,0.5)]"
        >
          <ChevronsIcon />
        </button>

        <form className="relative flex h-[126px] min-w-0 flex-1 items-center rounded-full bg-[#1f2c34] pr-[37px] pl-[31px]">
          <button type="button" aria-label="Emoji">
            <SmileIcon />
          </button>
          <div className="relative ml-8 flex min-w-0 flex-1 items-center">
            <span className="absolute left-0 h-[54px] w-1.5 bg-[#0fa884]" />
            <input
              type="text"
              aria-label="Message"
              placeholder="Message"
              className="relative w-full bg-transparent text-[40px] text-[#e9edef] outline-none placeholder:text-[#7d8c95]"
            />
          </div>
          <button type="button" aria-label="Attach">
            <ClipIcon />
          </button>
          <button type="button" aria-label="Camera" className="ml-16">
            <CameraIcon />
          </button>

          {/* watermark */}
          <div className="pointer-events-none absolute bottom-2 left-[461px] flex flex-col items-center text-[#66707a]">
            <span lang="ar" className="font-['DejaVu_Sans',sans-serif] text-[37px] leading-10 font-bold">
              مستقل
            </span>
            <span className="font-['Liberation_Sans',sans-serif] text-[21px] leading-6 font-bold">mostaql.com</span>
          </div>
        </form>

        <button
          type="button"
          aria-label="Record voice message"
          className="flex size-[129px] shrink-0 items-center justify-center rounded-full bg-[#00a884]"
        >
          <MicIcon />
        </button>
      </footer>
    </div>
  );
}
